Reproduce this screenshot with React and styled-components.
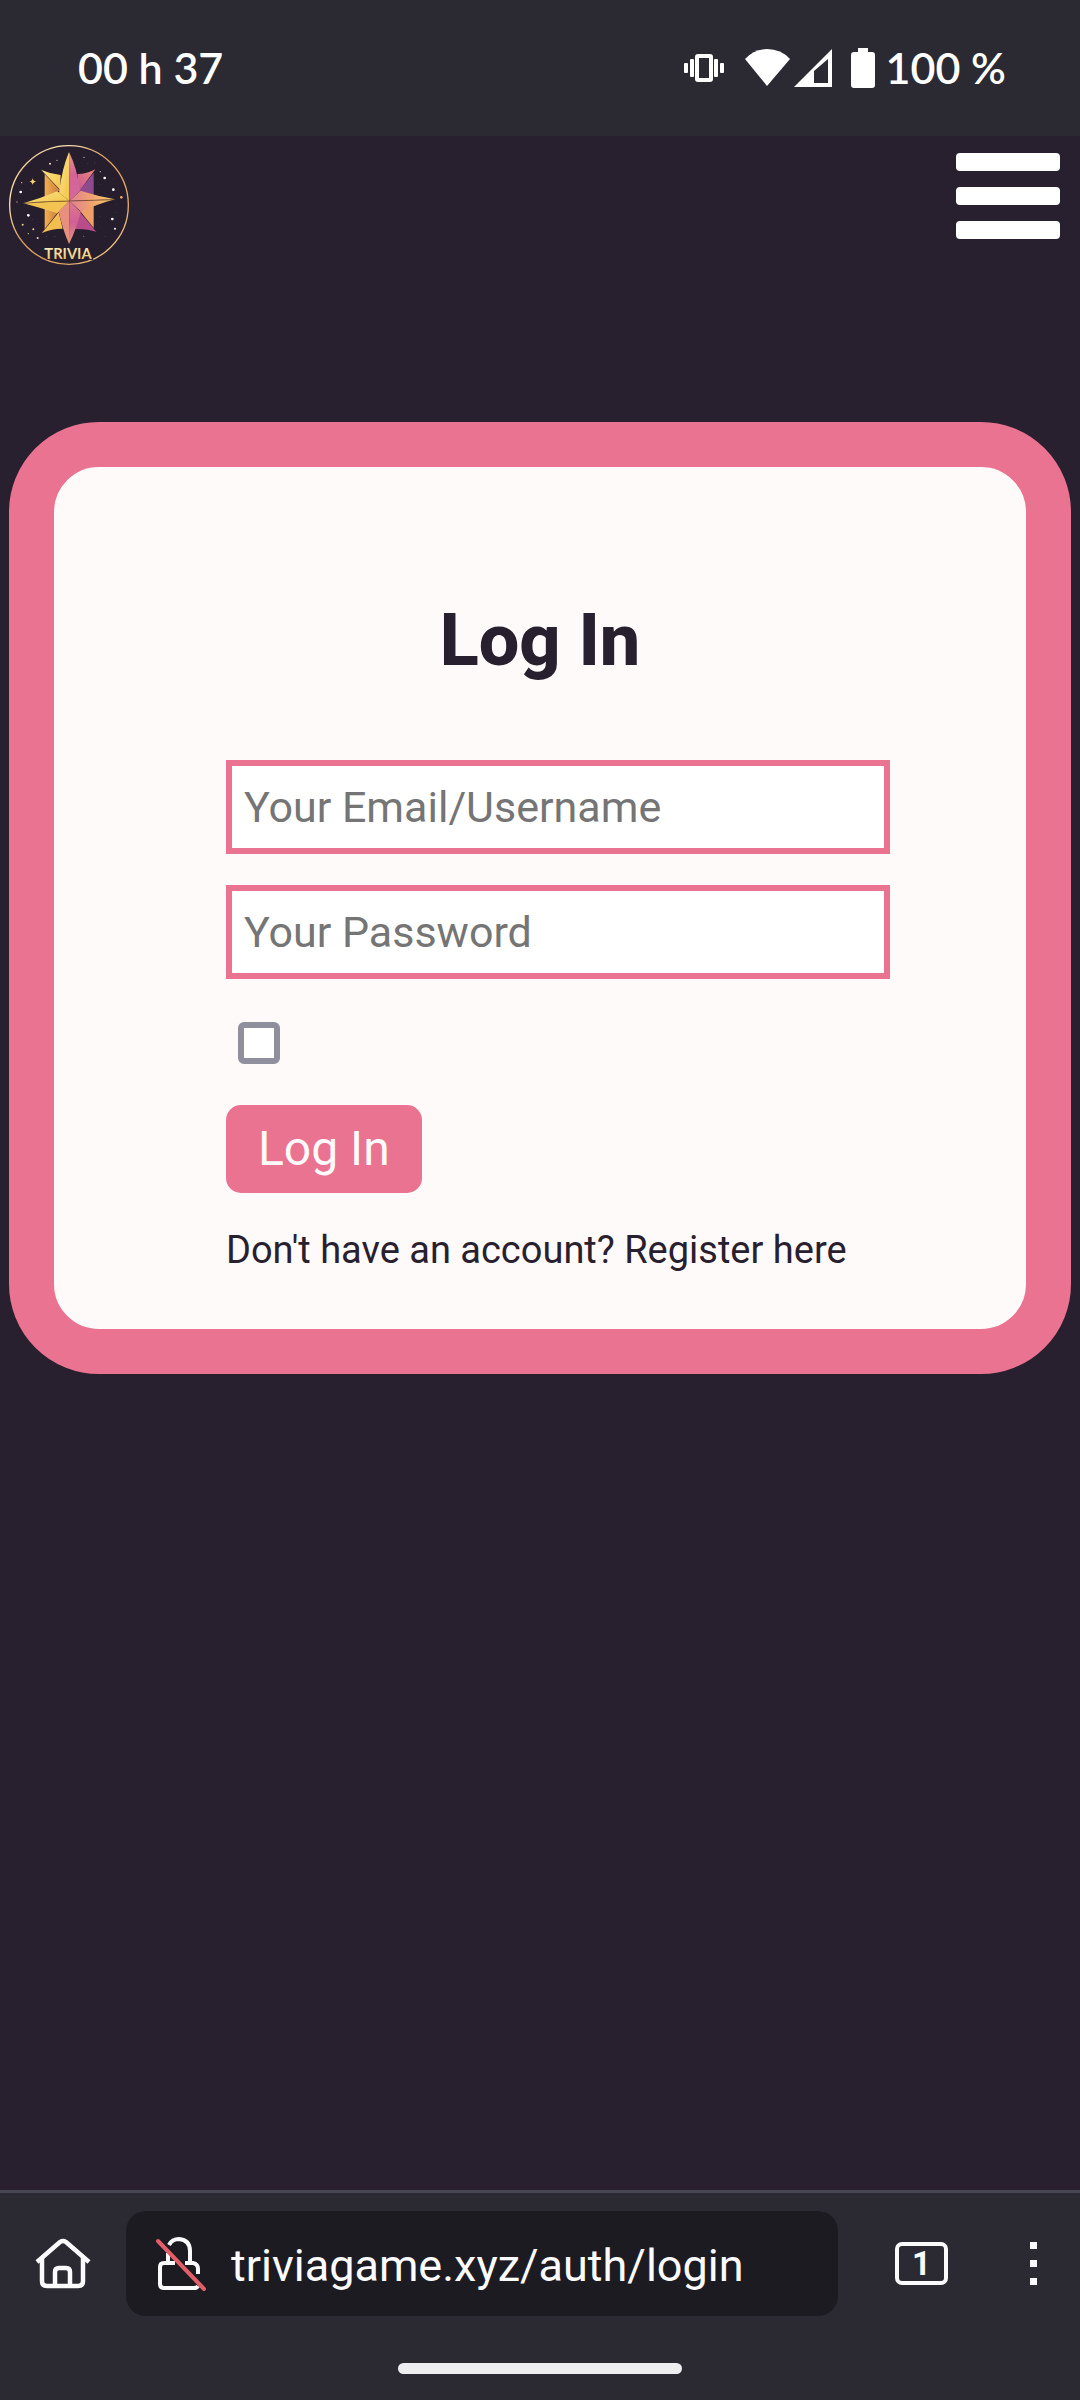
import React from "react";
import styled, { createGlobalStyle } from "styled-components";

const color = {
  chrome: "#2b2a33",
  chromeLine: "#484652",
  field: "#1c1b22",
  page: "#28202e",
  pink: "#ea7391",
  cream: "#fffafa",
  ink: "#28202e",
  placeholder: "#757575",
  light: "#fbfbfe",
};

const GlobalStyle = createGlobalStyle`
  *, *::before, *::after { box-sizing: border-box; }
  body {
    margin: 0;
    background: ${color.page};
    font-family: Roboto, "Liberation Sans", sans-serif;
  }
  button, input { font-family: inherit; margin: 0; }
`;

const Screen = styled.div`
  min-height: 100vh;
  display: flex;
  flex-direction: column;
`;

/* Device status bar */
const StatusBar = styled.header`
  display: flex;
  align-items: center;
  justify-content: space-between;
  height: 136px;
  padding: 0 74px 0 78px;
  background: ${color.chrome};
  color: #fff;
  font-family: Lato, "Open Sans", sans-serif;
  font-size: 43px;
  font-weight: 600;
  line-height: 52px;
`;

const StatusGroup = styled.div`
  display: flex;
  align-items: center;
`;

const StatusIcon = styled.svg`
  display: block;
  height: 40px;
  width: ${(p) => p.$width}px;
  margin-right: ${(p) => p.$gap}px;
  fill: #fff;
`;

/* Site */
const Site = styled.main`
  flex: 1;
  padding: 9px;
`;

const SiteHeader = styled.nav`
  display: flex;
  align-items: flex-start;
  justify-content: space-between;
  margin-bottom: 157px;
`;

const HomeLink = styled.a`
  display: block;
  width: 120px;
  height: 120px;
`;

const LogoDrawing = styled.svg`
  display: block;
  width: 100%;
  height: 100%;
`;

const MenuButton = styled.button`
  display: flex;
  flex-direction: column;
  gap: 16px;
  padding: 8px 11px;
  border: 0;
  background: none;
`;

const MenuBar = styled.span`
  width: 104px;
  height: 18px;
  border-radius: 4px;
  background: #fff;
`;

const Card = styled.section`
  display: flex;
  flex-direction: column;
  align-items: center;
  padding: 132px 20px 56px;
  border: 45px solid ${color.pink};
  border-radius: 90px;
  background: ${color.cream};
  color: ${color.ink};
`;

const Title = styled.h1`
  margin: 0 0 77px;
  font-size: 72px;
  font-weight: 800;
  line-height: 84px;
`;

const Form = styled.form`
  display: flex;
  flex-direction: column;
  align-items: flex-start;
  width: 628px;
  max-width: 100%;
`;

const TextField = styled.input`
  box-sizing: content-box;
  width: 100%;
  height: 82px;
  margin-bottom: 31px;
  padding: 0 12px;
  border: 6px solid ${color.pink};
  border-radius: 0;
  background: #fff;
  color: ${color.ink};
  font-size: 43px;
  outline: 0;
  &::placeholder { color: ${color.placeholder}; opacity: 1; }
`;

const Checkbox = styled.input`
  appearance: none;
  width: 42px;
  height: 42px;
  margin: 12px 12px 41px;
  border: 6px solid #8f8f9d;
  border-radius: 6px;
  background: #fff;
  &:checked { background: ${color.pink}; }
`;

const SubmitButton = styled.button`
  height: 88px;
  margin-bottom: 35px;
  padding: 0 32px;
  border: 0;
  border-radius: 15px;
  background: ${color.pink};
  color: ${color.cream};
  font-size: 48px;
  line-height: 56px;
`;

const RegisterLink = styled.a`
  color: ${color.ink};
  font-size: 38px;
  line-height: 45px;
  text-decoration: none;
`;

/* Browser toolbar */
const BrowserBar = styled.footer`
  display: flex;
  flex-direction: column;
  align-items: center;
  gap: 47px;
  padding: 18px 0 26px;
  border-top: 3px solid ${color.chromeLine};
  background: ${color.chrome};
  color: ${color.light};
`;

const Toolbar = styled.div`
  display: flex;
  align-items: stretch;
  width: 100%;
  height: 105px;
  padding-right: 19px;
`;

const ToolButton = styled.button`
  display: flex;
  align-items: center;
  justify-content: center;
  width: ${(p) => p.$width}px;
  padding: 0;
  border: 0;
  background: none;
  color: inherit;
`;

const ToolIcon = styled.svg`
  display: block;
  width: ${(p) => p.$width}px;
  height: ${(p) => p.$height}px;
`;

const AddressBox = styled.div`
  display: flex;
  flex: 1;
  align-items: center;
  gap: 25px;
  min-width: 0;
  padding: 0 30px;
  border-radius: 20px;
  background: ${color.field};
`;

const AddressInput = styled.input`
  flex: 1;
  min-width: 0;
  height: 60px;
  padding: 4px 0 0;
  border: 0;
  background: none;
  color: ${color.light};
  font-size: 45px;
  outline: 0;
`;

const TabCount = styled.span`
  display: flex;
  align-items: center;
  justify-content: center;
  width: 53px;
  height: 43px;
  border: 4px solid ${color.light};
  border-radius: 7px;
  font-size: 33px;
  font-weight: 700;
  line-height: 36px;
`;

const Handle = styled.div`
  width: 284px;
  height: 11px;
  border-radius: 6px;
  background: #eeedf0;
`;

const stars = [
  [150, 85, 3, "#f6dca6"], [171, 75, 2, "#d9c39a"], [252, 66, 2, "#d8c9a8"],
  [65, 142, 2, "#e9c58c"], [62, 170, 4, "#fff"], [314, 128, 4, "#fff"],
  [301, 109, 2, "#b9a9b0"], [340, 163, 4, "#fff"], [364, 186, 4, "#e8ac62"],
  [51, 200, 2, "#c3a58b"], [85, 240, 4, "#fff"], [68, 268, 3, "#f1cf86"],
  [100, 282, 3, "#f3d28c"], [85, 295, 2, "#e0c08a"], [113, 308, 3, "#f7e0ae"],
  [337, 251, 4, "#fff"], [345, 280, 3, "#fff"], [251, 303, 2, "#b3577f"],
  [139, 304, 1, "#a78f96"], [97, 253, 1, "#6e5a70"], [95, 162, 1, "#6e5a70"],
  [341, 129, 1, "#6e5a70"], [299, 148, 1, "#6e5a70"], [350, 207, 1, "#6e5a70"],
  [349, 232, 1, "#6e5a70"], [298, 243, 1, "#6e5a70"], [263, 84, 2, "#43374c"],
  [284, 83, 2, "#43374c"], [316, 303, 2, "#43374c"], [164, 304, 2, "#43374c"],
];

function Logo() {
  return (
    <LogoDrawing viewBox="27 29 360 360" aria-hidden="true">
      <defs>
        <linearGradient id="ring" x1="0" y1="0" x2="1" y2="1">
          <stop offset="0" stopColor="#d9a35c" />
          <stop offset="0.22" stopColor="#fbe6b8" />
          <stop offset="0.45" stopColor="#d99f5c" />
          <stop offset="0.75" stopColor="#e2aa68" />
          <stop offset="1" stopColor="#f6dca0" />
        </linearGradient>
        <linearGradient id="gold" x1="0" y1="0" x2="1" y2="1">
          <stop offset="0" stopColor="#fbe38a" />
          <stop offset="1" stopColor="#f3c447" />
        </linearGradient>
        <linearGradient id="amber" x1="0" y1="0" x2="1" y2="0">
          <stop offset="0" stopColor="#f2b04c" />
          <stop offset="1" stopColor="#c97b45" />
        </linearGradient>
        <linearGradient id="rose" x1="1" y1="0" x2="0" y2="1">
          <stop offset="0" stopColor="#ee8a78" />
          <stop offset="1" stopColor="#c65496" />
        </linearGradient>
        <linearGradient id="spike" x1="0" y1="0" x2="0" y2="1">
          <stop offset="0" stopColor="#eb9a7c" />
          <stop offset="0.45" stopColor="#d4639a" />
          <stop offset="1" stopColor="#d3689c" />
        </linearGradient>
        <linearGradient id="right" x1="0" y1="0" x2="1" y2="0">
          <stop offset="0" stopColor="#e07f92" />
          <stop offset="0.5" stopColor="#f1a36e" />
          <stop offset="1" stopColor="#f6d36a" />
        </linearGradient>
        <linearGradient id="lower" x1="0" y1="0" x2="0" y2="1">
          <stop offset="0" stopColor="#e07a8c" />
          <stop offset="0.5" stopColor="#cf5f95" />
          <stop offset="1" stopColor="#e59a78" />
        </linearGradient>
        <linearGradient id="letters" x1="0" y1="0" x2="0" y2="1">
          <stop offset="0" stopColor="#fff3c4" />
          <stop offset="1" stopColor="#e6bf5f" />
        </linearGradient>
      </defs>
      <circle cx="207" cy="209" r="178" fill="#261d2d" stroke="url(#ring)" strokeWidth="4" />
      {stars.map(([x, y, r, fill]) => (
        <circle key={`${x}-${y}`} cx={x} cy={y} r={r} fill={fill} />
      ))}
      <path d="M98 128 Q99 138 109 139 Q99 140 98 149 Q97 140 88 139 Q97 138 98 128Z" fill="#f8d46c" />

      <path d="M134 112 L180 165 L134 190Z" fill="url(#amber)" />
      <path d="M134 218 L176 228 L134 284Z" fill="url(#amber)" />
      <path d="M281 112 L238 166 L281 178Z" fill="#8d4a8c" />
      <path d="M281 212 L240 228 L281 284Z" fill="#f0a066" />

      <path d="M122 103 Q150 115 182 119 L180 165Z" fill="url(#gold)" />
      <path d="M286 102 Q262 116 232 116 L236 170Z" fill="url(#rose)" />
      <path d="M124 294 Q150 280 188 280 L176 230Z" fill="#f3bd50" />
      <path d="M290 290 Q262 280 226 281 L238 228Z" fill="#b94c8b" />
      <path d="M122 103 L180 164 M176 230 L124 294 M240 228 L290 290" stroke="#2b1d28" strokeWidth="2" fill="none" />

      <path d="M207 50 Q186 100 177 172 L208 197Z" fill="url(#gold)" />
      <path d="M207 50 Q232 100 240 168 L208 197Z" fill="url(#spike)" />

      <path d="M70 204 Q120 190 172 168 L208 197 L70 204Z" fill="url(#gold)" />
      <path d="M70 204 Q116 216 172 234 L208 197Z" fill="#f2c350" />
      <path d="M345 192 Q292 182 242 166 L208 197Z" fill="url(#right)" />
      <path d="M345 192 Q292 206 244 230 L208 197Z" fill="url(#right)" />
      <path d="M207 326 Q188 284 176 228 L208 197Z" fill="#e88f80" />
      <path d="M207 326 Q230 280 242 230 L208 197Z" fill="url(#lower)" />
      <path d="M70 204 Q140 197 208 197 L345 193" stroke="#5d3a24" strokeWidth="2" fill="none" />

      <text
        x="204"
        y="371"
        textAnchor="middle"
        fontFamily="Lato, sans-serif"
        fontWeight="700"
        fontSize="44"
        fill="url(#letters)"
        stroke="#261d2d"
        strokeWidth="6"
        paintOrder="stroke"
      >
        TRIVIA
      </text>
    </LogoDrawing>
  );
}

function StatusIcons() {
  return (
    <>
      <StatusIcon $width={40} $gap={21} viewBox="0 0 40 40" aria-label="Vibrate">
        <rect x="0" y="15" width="4" height="10" rx="1" />
        <rect x="6" y="11" width="4" height="18" rx="1" />
        <path fillRule="evenodd" d="M14 6h12a3 3 0 0 1 3 3v22a3 3 0 0 1-3 3H14a3 3 0 0 1-3-3V9a3 3 0 0 1 3-3zM15 10v20h10V10z" />
        <rect x="30" y="11" width="4" height="18" rx="1" />
        <rect x="36" y="15" width="4" height="10" rx="1" />
      </StatusIcon>
      <StatusIcon $width={45} $gap={4} viewBox="0 0 45 40" aria-label="Wi-Fi">
        <path d="M0 11 Q9 1 22 1 Q36 1 45 11 L22 38Z" />
      </StatusIcon>
      <StatusIcon $width={38} $gap={19} viewBox="0 0 38 40" aria-label="Mobile signal">
        <path fillRule="evenodd" d="M38 1V39H0zM34 11L20 23V35H34z" />
      </StatusIcon>
      <StatusIcon $width={24} $gap={11} viewBox="0 0 24 40" aria-label="Battery">
        <path d="M7 0h10v4h4a3 3 0 0 1 3 3v30a3 3 0 0 1-3 3H3a3 3 0 0 1-3-3V7a3 3 0 0 1 3-3h4z" />
      </StatusIcon>
    </>
  );
}

export default function App() {
  return (
    <>
      <GlobalStyle />
      <Screen>
        <StatusBar>
          <span>00 h 37</span>
          <StatusGroup>
            <StatusIcons />
            <span>100 %</span>
          </StatusGroup>
        </StatusBar>

        <Site>
          <SiteHeader>
            <HomeLink href="#" aria-label="Trivia home">
              <Logo />
            </HomeLink>
            <MenuButton type="button" aria-label="Open menu">
              <MenuBar />
              <MenuBar />
              <MenuBar />
            </MenuButton>
          </SiteHeader>

          <Card>
            <Title>Log In</Title>
            <Form onSubmit={(e) => e.preventDefault()}>
              <TextField type="text" aria-label="Your Email/Username" placeholder="Your Email/Username" />
              <TextField type="password" aria-label="Your Password" placeholder="Your Password" />
              <Checkbox type="checkbox" aria-label="Remember me" />
              <SubmitButton type="submit">Log In</SubmitButton>
              <RegisterLink href="#register">Don't have an account? Register here</RegisterLink>
            </Form>
          </Card>
        </Site>

        <BrowserBar>
          <Toolbar>
            <ToolButton type="button" aria-label="Home" $width={126}>
              <ToolIcon
                $width={56}
                $height={52}
                viewBox="0 0 56 52"
                fill="none"
                stroke={color.light}
                strokeWidth="4.5"
                strokeLinejoin="round"
              >
                <path d="M2 24 L25 4 Q28 2 31 4 L54 24" />
                <path d="M7 20V43Q7 48 12 48H43Q48 48 48 43V20" />
                <path d="M20 48V34Q20 30 24 30H31Q35 30 35 34V48" />
              </ToolIcon>
            </ToolButton>
            <AddressBox>
              <ToolIcon
                $width={50}
                $height={54}
                viewBox="0 0 50 54"
                fill="none"
                stroke={color.light}
                strokeWidth="4"
                aria-label="Connection is not secure"
              >
                <path d="M13 8Q16 2 23 2Q34 3 34 14V26H37Q42 27 42 32V37M29 26H35" />
                <path d="M12 16V26M19 26H8Q4 26 4 30V47Q4 51 8 51H38Q41 51 42 49" />
                <path d="M2 4L48 52" stroke="#e35e68" strokeLinecap="round" />
              </ToolIcon>
              <AddressInput type="text" aria-label="Address" defaultValue="triviagame.xyz/auth/login" />
            </AddressBox>
            <ToolButton type="button" aria-label="Tabs" $width={167}>
              <TabCount>1</TabCount>
            </ToolButton>
            <ToolButton type="button" aria-label="More options" $width={56}>
              <ToolIcon $width={7} $height={43} viewBox="0 0 7 43" fill={color.light}>
                <rect width="7" height="7" />
                <rect y="18" width="7" height="7" />
                <rect y="36" width="7" height="7" />
              </ToolIcon>
            </ToolButton>
          </Toolbar>
          <Handle />
        </BrowserBar>
      </Screen>
    </>
  );
}
